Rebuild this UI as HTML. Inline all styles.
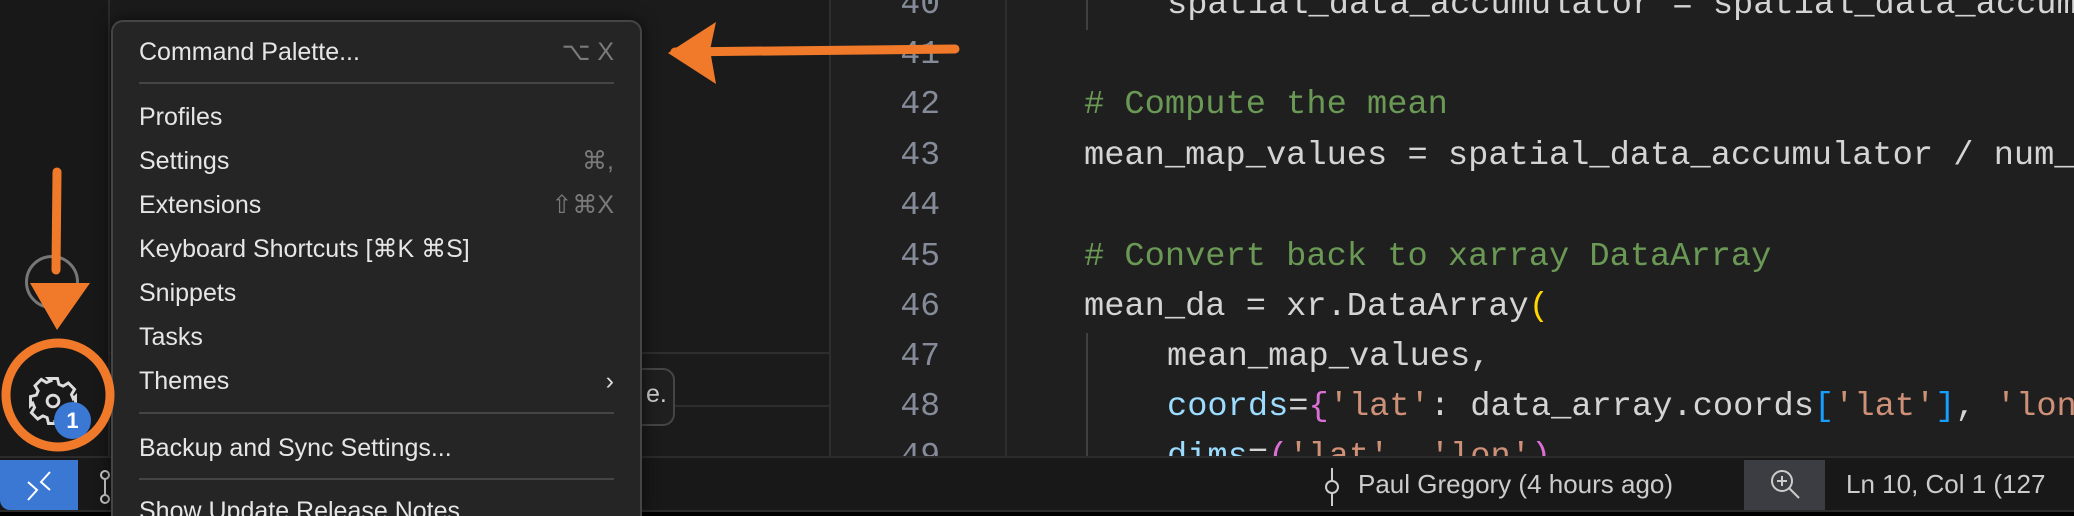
<!DOCTYPE html>
<html><head><meta charset="utf-8"><style>
*{margin:0;padding:0;box-sizing:border-box}
html,body{width:2074px;height:516px;overflow:hidden}
body{background:#000;position:relative;font-family:"Liberation Sans",sans-serif}
.a{position:absolute}
.mono{font-family:"Liberation Mono",monospace;font-size:33.7px;white-space:pre;color:#d4d4d4}
.ln{position:absolute;right:1134px;color:#858b98;font-family:"Liberation Mono",monospace;font-size:33px;line-height:50px}
.mi{position:absolute;left:139px;color:#e6e6e6;font-size:25px;line-height:30px;white-space:nowrap}
.sc{position:absolute;right:1460px;color:#7a7a7a;font-size:25px;line-height:30px}
.sep{position:absolute;left:139px;width:475px;height:2px;background:#454545}
.clip{position:absolute;left:1007px;top:0;width:1067px;height:456px;overflow:hidden}
.clip .mono{margin-left:-1007px}
.clip2{position:absolute;left:1000px;top:456px;width:1074px;height:60px;overflow:hidden}
</style></head><body>
<div class="a" style="left:0;top:0;width:108px;height:458px;background:#181818"></div>
<div class="a" style="left:108px;top:0;width:2px;height:458px;background:#2b2b2b"></div>
<div class="a" style="left:110px;top:0;width:720px;height:458px;background:#1b1b1b"></div>
<div class="a" style="left:110px;top:352px;width:720px;height:2px;background:#2e2e2e"></div>
<div class="a" style="left:110px;top:405px;width:720px;height:2px;background:#2e2e2e"></div>
<div class="a" style="left:829px;top:0;width:2px;height:458px;background:#2e2e2e"></div>
<div class="a" style="left:831px;top:0;width:1243px;height:458px;background:#1f1f1f"></div>
<div class="a" style="left:1005px;top:0;width:2px;height:458px;background:#2e2e2e"></div>
<div class="a" style="left:500px;top:368px;width:175px;height:58px;border:2px solid #454545;border-radius:12px;background:#1f1f1f"></div>
<div class="a" style="left:646px;top:380px;color:#ccc;font-size:25px">e.</div>

<div class="ln" style="top:-20px">40</div>
<div class="ln" style="top:30px">41</div>
<div class="ln" style="top:80px">42</div>
<div class="ln" style="top:131px">43</div>
<div class="ln" style="top:181px">44</div>
<div class="ln" style="top:232px">45</div>
<div class="ln" style="top:282px">46</div>
<div class="ln" style="top:332px">47</div>
<div class="ln" style="top:382px">48</div>
<div class="a" style="left:0;top:432px;width:940px;height:24px;overflow:hidden"><div class="ln" style="top:0;right:0">49</div></div>
<div class="a" style="left:1086px;top:0;width:2px;height:30px;background:#404040"></div>
<div class="a" style="left:1086px;top:333px;width:2px;height:125px;background:#404040"></div>
<div class="clip">
<div class="a mono" style="left:1167px;top:-20px;line-height:50px">spatial_data_accumulator = spatial_data_accumulator</div>
<div class="a mono" style="left:1084px;top:80px;line-height:50px;color:#6a9955"># Compute the mean</div>
<div class="a mono" style="left:1084px;top:131px;line-height:50px">mean_map_values = spatial_data_accumulator / num_</div>
<div class="a mono" style="left:1084px;top:232px;line-height:50px;color:#6a9955"># Convert back to xarray DataArray</div>
<div class="a mono" style="left:1084px;top:282px;line-height:50px">mean_da = xr.DataArray<span style="color:#ffd700">(</span></div>
<div class="a mono" style="left:1167px;top:332px;line-height:50px">mean_map_values,</div>
<div class="a mono" style="left:1167px;top:382px;line-height:50px"><span style="color:#9cdcfe">coords</span>=<span style="color:#da70d6">{</span><span style="color:#ce9178">'lat'</span>: data_array.coords<span style="color:#179fff">[</span><span style="color:#ce9178">'lat'</span><span style="color:#179fff">]</span>, <span style="color:#ce9178">'lon'</span></div>
<div class="a mono" style="left:1167px;top:432px;line-height:50px"><span style="color:#9cdcfe">dims</span>=<span style="color:#da70d6">(</span><span style="color:#ce9178">'lat'</span>, <span style="color:#ce9178">'lon'</span><span style="color:#da70d6">)</span></div>
</div>

<div class="a" style="left:0;top:456px;width:2074px;height:2px;background:#2b2b2b"></div>
<div class="a" style="left:0;top:458px;width:2074px;height:52px;background:#181818"></div>
<div class="a" style="left:0;top:510px;width:2074px;height:2px;background:#2b2b2b"></div>
<div class="a" style="left:0;top:460px;width:78px;height:50px;background:#3a78d4;border-bottom-left-radius:10px"></div>
<svg class="a" style="left:24px;top:470px" width="30" height="32" viewBox="0 0 30 32"><path d="M4 30L13 20L4 12M26 2L17 12L26 20" stroke="#fff" stroke-width="2" fill="none"/></svg>
<svg class="a" style="left:98px;top:470px" width="14" height="34"><circle cx="7" cy="5" r="4" stroke="#ccc" stroke-width="2" fill="none"/><circle cx="7" cy="29" r="4" stroke="#ccc" stroke-width="2" fill="none"/><path d="M7 9V25" stroke="#ccc" stroke-width="2"/></svg>
<svg class="a" style="left:1322px;top:468px" width="20" height="38"><circle cx="10" cy="19" r="6" stroke="#ccc" stroke-width="2" fill="none"/><path d="M10 0V13M10 25V38" stroke="#ccc" stroke-width="2"/></svg>
<div class="a" style="left:1358px;top:468px;color:#ccc;font-size:26px;line-height:32px;white-space:nowrap">Paul Gregory (4 hours ago)</div>
<div class="a" style="left:1744px;top:460px;width:81px;height:50px;background:#3c3d42"></div>
<svg class="a" style="left:1768px;top:468px" width="34" height="34"><circle cx="14" cy="13" r="10" stroke="#ccc" stroke-width="2" fill="none"/><path d="M14 8V18M9 13H19M21 20L31 30" stroke="#ccc" stroke-width="2"/></svg>
<div class="a" style="left:1846px;top:468px;width:228px;overflow:hidden;color:#ccc;font-size:26px;line-height:32px;white-space:nowrap">Ln 10, Col 1 (127</div>

<div class="a" style="left:25px;top:255px;width:54px;height:54px;border:3px solid #777;border-radius:50%"></div>
<svg class="a" style="left:26px;top:374px" width="54" height="54" viewBox="0 0 24 24"><path fill="none" stroke="#ddd" stroke-width="1.3" d="M10 2h4l.6 2.6 1.9.8 2.3-1.4 2.8 2.8-1.4 2.3.8 1.9L22 10v4l-2.6.6-.8 1.9 1.4 2.3-2.8 2.8-2.3-1.4-1.9.8L14 22h-4l-.6-2.6-1.9-.8-2.3 1.4-2.8-2.8 1.4-2.3-.8-1.9L2 14v-4l2.6-.6.8-1.9-1.4-2.3 2.8-2.8 2.3 1.4 1.9-.8z"/><circle cx="12" cy="12" r="2.6" fill="none" stroke="#ddd" stroke-width="1.3"/></svg>
<div class="a" style="left:54px;top:402px;width:37px;height:37px;border-radius:50%;background:#3a78d4;color:#fff;font-size:22px;font-weight:bold;text-align:center;line-height:37px">1</div>

<div class="a" style="left:111px;top:20px;width:531px;height:496px;background:#252526;border:2px solid #454545;border-bottom:none;border-radius:12px 12px 0 0;box-shadow:0 0 16px rgba(0,0,0,.6);overflow:hidden"></div>
<div class="mi" style="top:37px">Command Palette...</div><div class="sc" style="top:37px">⌥ X</div>
<div class="sep" style="top:82px"></div>
<div class="mi" style="top:102px">Profiles</div>
<div class="mi" style="top:146px">Settings</div><div class="sc" style="top:146px">⌘,</div>
<div class="mi" style="top:190px">Extensions</div><div class="sc" style="top:190px">⇧⌘X</div>
<div class="mi" style="top:234px">Keyboard Shortcuts [⌘K ⌘S]</div>
<div class="mi" style="top:278px">Snippets</div>
<div class="mi" style="top:322px">Tasks</div>
<div class="mi" style="top:366px">Themes</div><div class="sc" style="top:366px;color:#ddd">›</div>
<div class="sep" style="top:412px"></div>
<div class="mi" style="top:433px">Backup and Sync Settings...</div>
<div class="sep" style="top:478px"></div>
<div class="a" style="left:139px;top:496px;height:20px;overflow:hidden"><div class="mi" style="left:0;top:0;position:relative">Show Update Release Notes</div></div>

<svg class="a" style="left:0;top:0" width="2074" height="516">
<path d="M675 52L955 49" stroke="#f07a2a" stroke-width="9" stroke-linecap="round"/>
<path d="M668 53L716 22L710 50L716 84Z" fill="#f07a2a"/>
<path d="M57 172L56 270" stroke="#f07a2a" stroke-width="9" stroke-linecap="round"/>
<path d="M30 283L90 283L57 330Z" fill="#f07a2a"/>
<circle cx="58" cy="395" r="52" stroke="#f07a2a" stroke-width="9" fill="none"/>
</svg>
</body></html>
